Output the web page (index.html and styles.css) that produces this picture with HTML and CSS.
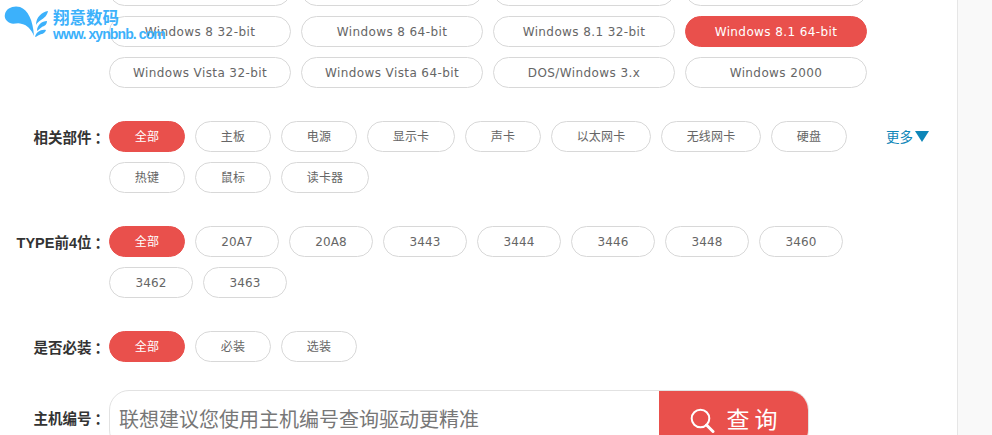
FILE: index.html
```html
<!DOCTYPE html>
<html lang="zh">
<head>
    <meta charset="UTF-8">
    <meta name="viewport" content="width=device-width, initial-scale=1.0">
    <title>驱动下载</title>
    <link rel="stylesheet" href="styles.css">
</head>
<body>
    <div class="page">
        <div class="filter filter-os">
            <div class="filter-label"></div>
            <div class="pills">
                <a class="pill w182">Windows 10 32-bit</a>
                <a class="pill w182">Windows 10 64-bit</a>
                <a class="pill w182">Windows 7 32-bit</a>
                <a class="pill w182">Windows 7 64-bit</a>
                <a class="pill w182">Windows 8 32-bit</a>
                <a class="pill w182">Windows 8 64-bit</a>
                <a class="pill w182">Windows 8.1 32-bit</a>
                <a class="pill w182 active">Windows 8.1 64-bit</a>
                <a class="pill w182">Windows Vista 32-bit</a>
                <a class="pill w182">Windows Vista 64-bit</a>
                <a class="pill w182">DOS/Windows 3.x</a>
                <a class="pill w182">Windows 2000</a>
            </div>
        </div>

        <div class="filter filter-parts">
            <div class="filter-label">相关部件<span class="colon">：</span></div>
            <div class="pills">
                <a class="pill active">全部</a>
                <a class="pill">主板</a>
                <a class="pill">电源</a>
                <a class="pill w88">显示卡</a>
                <a class="pill">声卡</a>
                <a class="pill w100">以太网卡</a>
                <a class="pill w100">无线网卡</a>
                <a class="pill">硬盘</a>
                <a class="pill">热键</a>
                <a class="pill">鼠标</a>
                <a class="pill w88">读卡器</a>
            </div>
            <a class="more">更多<span class="more-arrow"></span></a>
        </div>

        <div class="filter filter-type">
            <div class="filter-label">TYPE前4位<span class="colon">：</span></div>
            <div class="pills">
                <a class="pill active">全部</a>
                <a class="pill w84">20A7</a>
                <a class="pill w84">20A8</a>
                <a class="pill w84">3443</a>
                <a class="pill w84">3444</a>
                <a class="pill w84">3446</a>
                <a class="pill w84">3448</a>
                <a class="pill w84">3460</a>
                <a class="pill w84">3462</a>
                <a class="pill w84">3463</a>
            </div>
        </div>

        <div class="filter filter-need">
            <div class="filter-label">是否必装<span class="colon">：</span></div>
            <div class="pills">
                <a class="pill active">全部</a>
                <a class="pill">必装</a>
                <a class="pill">选装</a>
            </div>
        </div>

        <div class="filter filter-search">
            <div class="filter-label">主机编号<span class="colon">：</span></div>
            <div class="search-box">
                <div class="search-input">联想建议您使用主机编号查询驱动更精准</div>
                <button class="search-btn">
                    <svg class="search-icon" width="25" height="25" viewBox="0 0 25 25">
                        <circle cx="10.5" cy="10.5" r="8.8" fill="none" stroke="#fff" stroke-width="2"/>
                        <path d="M16.5 17 L23 23.5" stroke="#fff" stroke-width="3" stroke-linecap="round"/>
                    </svg>
                    <span>查 询</span>
                </button>
            </div>
        </div>
    </div>

    <!-- 水印 -->
    <div class="watermark">
        <svg class="watermark-logo" width="53" height="40" viewBox="0 0 53 40">
            <path d="M5 14 C6 8 14 5 20 7 C28 10 33 20 34 36 C31 29 27 25 22 24 C17 22 14 25 10 23 C6 21 4 18 5 14 Z" fill="#3cb1fb"/>
            <path d="M36 25 C36 17 42 12 48 11 C47 16 44 18 41 20 C39 21 37 23 36 25 Z" fill="#3cb1fb"/>
            <path d="M37 31 C37 25 42 21 47 21 C47 25 44 26 42 27 C40 28 39 30 37 31 Z" fill="#3cb1fb"/>
            <path d="M35 37 C36 32 41 29 46 30 C45 34 41 34 39 35 C37 36 36 37 35 37 Z" fill="#3cb1fb"/>
        </svg>
        <div class="watermark-text">
            <div class="watermark-name">翔意数码</div>
            <div class="watermark-url">www. xynbnb. com</div>
        </div>
    </div>
</body>
</html>
```

FILE: styles.css
```css
html, body {
    height: 100%;
    margin: 0;
    padding: 0;
    overflow: hidden;
}
body {
    font-family: "Liberation Sans", Arial, "Noto Sans CJK SC", sans-serif;
    background-color: #f9f9f9;
    color: #666;
}
.page {
    width: 957px;
    height: 100%;
    background-color: #fff;
    border-right: 1px solid #e6e6e6;
    overflow: hidden;
}
.filter {
    display: flex;
    align-items: flex-start;
}
.filter-os {
    margin-top: -25px;
    margin-bottom: 33px;
}
.filter-parts {
    margin-bottom: 33px;
}
.filter-type {
    margin-bottom: 33px;
}
.filter-need {
    margin-bottom: 25px;
}
.filter-label {
    width: 109px;
    flex-shrink: 0;
    line-height: 34px;
    font-size: 14.5px;
    font-weight: bold;
    color: #333;
    text-align: right;
    white-space: nowrap;
    font-family: "Liberation Sans", "Noto Sans CJK SC", sans-serif;
}
.colon {
    margin-left: 3px;
}
.pills {
    width: 768px;
    display: flex;
    flex-wrap: wrap;
    gap: 10px;
}
.pill {
    width: 76px;
    height: 31px;
    box-sizing: border-box;
    border: 1px solid #d8d8d8;
    border-radius: 16px;
    background-color: #fff;
    padding-top: 1px;
    font-size: 12px;
    line-height: 29px;
    letter-spacing: 0.15px;
    text-align: center;
    color: #666;
    white-space: nowrap;
    cursor: pointer;
    font-family: "DejaVu Sans", "Noto Sans CJK SC", sans-serif;
}
.w182 {
    width: 182px;
    letter-spacing: 0.4px;
}
.w100 {
    width: 100px;
}
.w88 {
    width: 88px;
}
.w84 {
    width: 84px;
}
.pill.active {
    background-color: #e9504c;
    border-color: #e9504c;
    color: #fff;
}
.more {
    font-size: 13.5px;
    line-height: 30px;
    margin-left: 9px;
    color: #0d86b8;
    font-family: "Noto Sans CJK SC", sans-serif;
    display: flex;
    align-items: center;
    white-space: nowrap;
}
.more-arrow {
    display: inline-block;
    width: 0;
    height: 0;
    margin-left: 2px;
    border-left: 7px solid transparent;
    border-right: 7px solid transparent;
    border-top: 11px solid #0d86b8;
}
.filter-search .filter-label {
    line-height: 58px;
}
.search-box {
    width: 700px;
    height: 60px;
    box-sizing: border-box;
    border: 1px solid #e2e2e2;
    border-radius: 20px;
    display: flex;
    overflow: hidden;
}
.search-input {
    flex: 1;
    font-size: 20px;
    line-height: 55px;
    padding-left: 9px;
    color: #777;
    font-family: "Noto Sans CJK SC", sans-serif;
}
.search-btn {
    width: 150px;
    margin: -1px -1px -1px 0;
    border: none;
    background-color: #e9504c;
    color: #fff;
    font-size: 23px;
    font-family: "Noto Sans CJK SC", sans-serif;
    display: flex;
    align-items: flex-start;
    justify-content: center;
    gap: 11px;
    padding: 12px 0 0 0;
    line-height: 32px;
}
.search-icon {
    margin-top: 6px;
}
.watermark {
    position: absolute;
    left: 0;
    top: 0;
    display: flex;
    color: #3cb1fb;
}
.watermark-text {
    padding-top: 7px;
}
.watermark-name {
    font-size: 16.5px;
    line-height: 20px;
    font-weight: bold;
    font-family: "Noto Sans CJK SC", sans-serif;
}
.watermark-url {
    font-size: 14px;
    line-height: 14px;
    font-weight: bold;
    letter-spacing: -0.9px;
    white-space: nowrap;
}
```
